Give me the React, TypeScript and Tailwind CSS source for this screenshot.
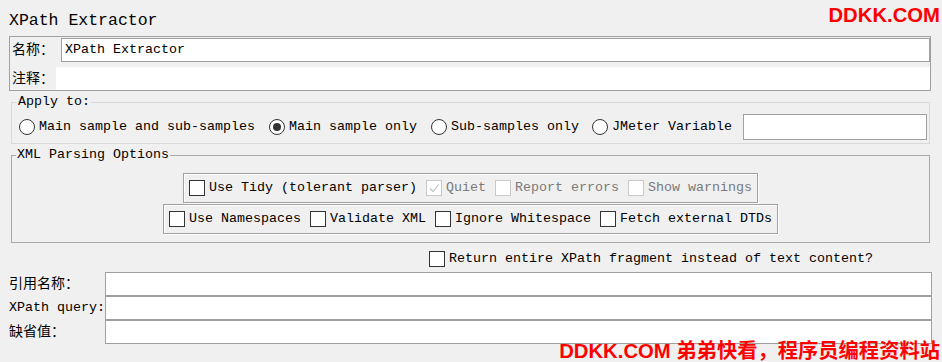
import React from "react";

const mono = { fontFamily: '"Liberation Mono", "Noto Sans CJK SC", monospace' };

function Radio({ checked }: { checked?: boolean }) {
  return (
    <span className="w-[16px] h-[16px] rounded-full border border-[#333] bg-white flex items-center justify-center shrink-0">
      {checked && <span className="w-[8px] h-[8px] rounded-full bg-[#333]" />}
    </span>
  );
}

function Check({ checked, disabled }: { checked?: boolean; disabled?: boolean }) {
  return (
    <span
      className={`w-[16px] h-[16px] border bg-white flex items-center justify-center shrink-0 ${
        disabled ? "border-[#c8c8c8]" : "border-[#333]"
      }`}
    >
      {checked && (
        <svg width="12" height="12" viewBox="0 0 12 12">
          <path d="M2 6.5 L5 9.5 L10.5 2.5" fill="none" stroke={disabled ? "#c4c4c4" : "#333"} strokeWidth="1.2" />
        </svg>
      )}
    </span>
  );
}

function Opt({ label, checked, disabled, first }: { label: string; checked?: boolean; disabled?: boolean; first?: boolean }) {
  return (
    <div className={`flex items-center ${first ? "" : "ml-[9px]"}`}>
      <Check checked={checked} disabled={disabled} />
      <span className={`ml-[4px] whitespace-pre ${disabled ? "text-[#7a7a7a]" : "text-black"}`}>{label}</span>
    </div>
  );
}

export default function App() {
  return (
    <div className="relative w-[942px] h-[362px] bg-[#f0f0f0] overflow-hidden text-[13.333px] leading-[16px] text-black" style={mono}>
      {/* Title */}
      <div className="h-[36px] pt-[11px] pl-[9px] text-[16.5px] leading-[20px]">XPath Extractor</div>

      {/* Name / comment */}
      <div className="ml-[9px] w-[922px] border border-[#a0a0a0]">
        <div className="flex pt-[1px]">
          <div className="w-[51px] pl-[2px] flex items-center text-[14px]">名称：</div>
          <div className="flex-1 h-[24px] border border-[#a0a0a0] bg-white flex items-center pl-[3px]">XPath Extractor</div>
        </div>
        <div className="flex pt-[5px]">
          <div className="w-[46px] pl-[2px] flex items-center text-[14px] -mt-[5px] pt-[6px]">注释：</div>
          <div className="flex-1 h-[23px] bg-white" />
        </div>
      </div>

      {/* Apply to */}
      <fieldset className="mt-[3px] ml-[11px] w-[919px] border border-[#d9d9d9] pr-[2px] pt-[4px] pb-[3px]">
        <legend className="ml-[5px] px-[1px] leading-[16px]">Apply to:</legend>
        <div className="flex items-center h-[26px] pl-[7px]">
          <Radio />
          <span className="ml-[4px] whitespace-pre">Main sample and sub-samples</span>
          <span className="ml-[14px]"><Radio checked /></span>
          <span className="ml-[4px] whitespace-pre">Main sample only</span>
          <span className="ml-[14px]"><Radio /></span>
          <span className="ml-[4px] whitespace-pre">Sub-samples only</span>
          <span className="ml-[13px]"><Radio /></span>
          <span className="ml-[4px] whitespace-pre">JMeter Variable</span>
          <div className="ml-[11px] w-[184px] h-[26px] border border-[#a0a0a0] bg-white" />
        </div>
      </fieldset>

      {/* XML Parsing Options */}
      <fieldset className="mt-[3px] ml-[11px] w-[919px] border border-[#a9a9a9] pt-[10px] pb-[8px] flex flex-col items-center">
        <legend className="ml-[4px] px-[1px] leading-[16px]">XML Parsing Options</legend>
        <div className="flex flex-col items-center gap-[1px]">
          <div className="h-[30px] px-[5px] flex items-center border border-[#a0a0a0] shadow-[inset_1px_1px_0_#fff,1px_1px_0_#fff]">
            <Opt first label="Use Tidy (tolerant parser)" />
            <Opt label="Quiet" checked disabled />
            <Opt label="Report errors" disabled />
            <Opt label="Show warnings" disabled />
          </div>
          <div className="h-[30px] px-[5px] flex items-center border border-[#a0a0a0] shadow-[inset_1px_1px_0_#fff,1px_1px_0_#fff]">
            <Opt first label="Use Namespaces" />
            <Opt label="Validate XML" />
            <Opt label="Ignore Whitespace" />
            <Opt label="Fetch external DTDs" />
          </div>
        </div>
      </fieldset>

      {/* Return fragment */}
      <div className="mt-[8px] ml-[429px] flex items-center h-[16px]">
        <Check />
        <span className="ml-[4px] whitespace-pre">Return entire XPath fragment instead of text content?</span>
      </div>

      {/* Bottom fields */}
      <div className="mt-[5px] flex flex-col">
        {[
          { label: "引用名称：", cjk: true },
          { label: "XPath query:", cjk: false },
          { label: "缺省值：", cjk: true },
        ].map((f) => (
          <div key={f.label} className="flex h-[24px]">
            <div className={`w-[105px] pl-[9px] flex items-center ${f.cjk ? "text-[14px]" : ""}`}>{f.label}</div>
            <div className="w-[827px] h-[24px] border border-[#a0a0a0] bg-white" />
          </div>
        ))}
      </div>

      {/* Watermarks */}
      <div
        className="absolute right-[2px] top-[2px] text-[20.3px] leading-[26px] font-bold text-[#ff0000]"
        style={{ fontFamily: '"Liberation Sans", "Noto Sans CJK SC", sans-serif' }}
      >
        DDKK.COM
      </div>
      <div
        className="absolute right-[2px] top-[338px] text-[20.3px] leading-[26px] font-bold text-[#ff0000] whitespace-pre"
        style={{ fontFamily: '"Liberation Sans", "Noto Sans CJK SC", sans-serif' }}
      >
        DDKK.COM 弟弟快看，程序员编程资料站
      </div>
    </div>
  );
}
